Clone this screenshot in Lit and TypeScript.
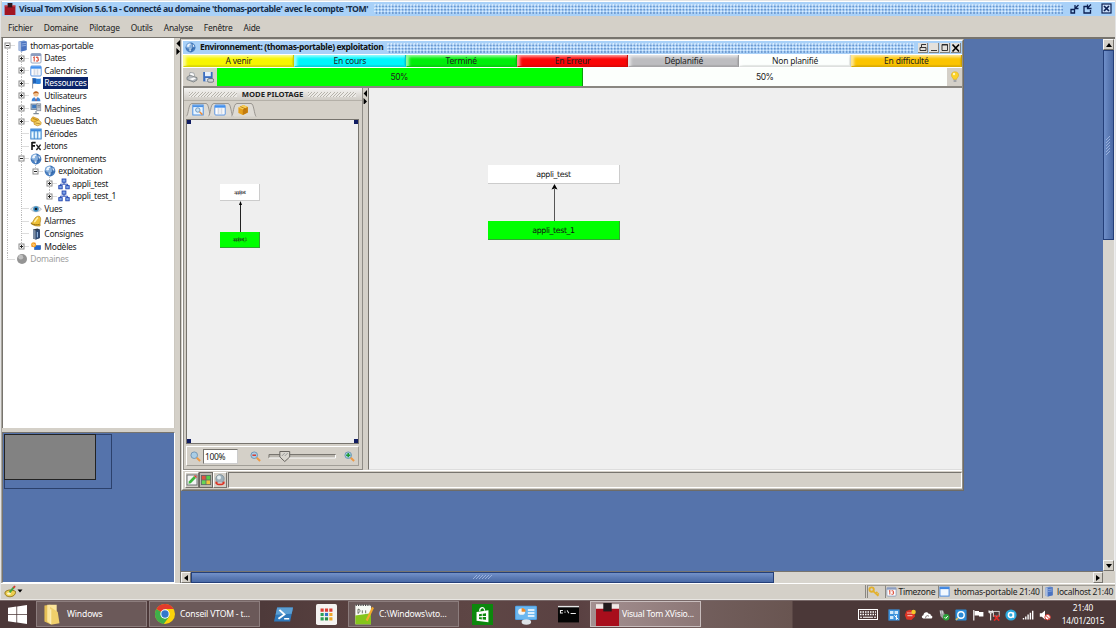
import { LitElement, html, svg, css, nothing, TemplateResult } from "lit";
import { customElement } from "lit/decorators.js";

type Glyph = TemplateResult;

const globe = svg`<circle cx="6" cy="6" r="5.4" fill="#4a80c2"/><circle cx="4.8" cy="4.6" r="3.6" fill="#86b0de"/><path d="M2 4.4 3.4 2.2 5.6 1.6 6.4 2.6 4.8 3.4 5 5 3 5.4zM8 2.4 9.6 3.4 10.2 5.4 8.6 5.2zM4.2 7 6.8 7.2 6.4 9.4 5.2 10.2z" fill="#f0f6fc"/><path d="M.9 6.6C4 8.4 8 8.4 11.1 6.6M7 .8C9 4 9 8 6.6 11.2" stroke="#2c5d9e" stroke-width=".6" fill="none"/>`;
const server = svg`<path d="M2.6 1.5 8 .6 10.6 1.4V10L5.2 11.4 2.6 10.6z" fill="#6f93cf"/><path d="M2.6 1.5 5.2 2.2V11.4L2.6 10.6z" fill="#a9bcdf"/><path d="M5.2 2.2 10.6 1.4V10L5.2 11.4z" fill="#4a72c0"/><path d="M5.6 4 10.2 3.3M5.6 6 10.2 5.3" stroke="#a9c2ea" stroke-width=".7"/>`;
const calDay = svg`<rect x="1" y="1.5" width="10" height="9.5" rx="1" fill="#fff" stroke="#7e92b5" stroke-width=".8"/><path d="M1 2h10v2H1z" fill="#8c9dc0"/><path d="M3.2 5.6 4.2 5V9.4M6 5.6C7 4.6 8.8 5.4 7.8 6.8 9.2 7.6 8 9.8 6 8.8" stroke="#d94a36" fill="none" stroke-width="1.1"/>`;
const calendar = svg`<rect x=".8" y="1" width="10.4" height="10" rx="1" fill="#fff" stroke="#4b8be0" stroke-width=".9"/><path d="M1 1.3h10v2.4H1z" fill="#4391ef"/><path d="M3 5h6.5M3 7h6.5M3 9h6.5M4.5 4.4v5.4M7.5 4.4v5.4" stroke="#c4cbd8" stroke-width=".6"/>`;
const columns = svg`<rect x=".8" y="1" width="10.4" height="10" fill="#bfe3fa" stroke="#377fca" stroke-width=".9"/><path d="M1 1.3h10v2H1z" fill="#3d89dd"/><path d="M4.3 3v8M7.7 3v8" stroke="#377fca" stroke-width=".8"/><path d="M2.4 4.5v5M6 4.5v5M9.4 4.5v5" stroke="#fff"/>`;
const flag = svg`<path d="M2.6 1v10.5" stroke="#8d99ab" stroke-width="1.1"/><path d="M3 1.4C5 .4 7 2.6 10.8 1.4V6.6C7 8 5 5.8 3 6.8z" fill="#2f84de"/><path d="M3 1.4C4 .9 5 1.3 6 1.7V6.6C5 6.2 4 6.3 3 6.8z" fill="#1e60b5"/>`;
const user = svg`<path d="M1.6 11.2C1.6 8.4 3.6 7 6 7s4.4 1.4 4.4 4.2z" fill="#3e85d8"/><path d="M4.4 7 6 9.6 7.6 7z" fill="#fff"/><path d="M6 7.6 5.4 10.8h1.3z" fill="#d8432c"/><circle cx="6" cy="4" r="2.6" fill="#f3c08b"/><path d="M3.2 4C3 .4 9 .4 8.8 4 7.8 2.6 5 2.6 3.2 4z" fill="#bc6422"/>`;
const machine = svg`<rect x="1" y="1" width="6.6" height="5.4" fill="#9cb3ce" stroke="#6d7c90" stroke-width=".8"/><rect x="2.2" y="2" width="4.2" height="3.2" fill="#3b78bf"/><rect x="6.8" y=".8" width="4" height="7" fill="#c1c7d0" stroke="#727d8b" stroke-width=".6"/><path d="M7.4 2.4h2.8M7.4 4h2.8" stroke="#5f6d7e" stroke-width=".7"/><path d="M6 8v2M3.4 10.6h5.4" stroke="#7e8b99" stroke-width="1.2"/>`;
const queue = svg`<path d="M1 4.2 2.8 1.8 8.6 4 8.8 6.6 6.2 8 1.2 6z" fill="#f2c03b" stroke="#b5790f" stroke-width=".6"/><path d="M4 7 8.6 5 11.2 7.4 10.8 9.6 7.4 10.8 4.2 9.4z" fill="#f7d568" stroke="#b5790f" stroke-width=".6"/><path d="M2.6 3.4 7.4 5M5.4 8 9.8 8.6" stroke="#8c5a10" stroke-width=".6"/>`;
const tokens = svg`<path d="M2 2v8M2 2.6h3.6M2 5.9h3" stroke="#111" stroke-width="1.6" fill="none"/><path d="M6.4 4.6 10.6 10M10.6 4.6 6.4 10" stroke="#222" stroke-width="1.4"/>`;
const network = svg`<path d="M6 4v2.2M2.4 8V6.2h7.2V8" stroke="#2a50b5" fill="none"/><rect x="4.1" y="1" width="3.8" height="3.2" fill="#7da4e6" stroke="#2144b0" stroke-width=".9"/><rect x=".8" y="7.6" width="3.4" height="3.2" fill="#7da4e6" stroke="#2144b0" stroke-width=".9"/><rect x="7.8" y="7.6" width="3.4" height="3.2" fill="#7da4e6" stroke="#2144b0" stroke-width=".9"/>`;
const eye = svg`<path d="M.6 6.2C3 2.4 9 2.4 11.4 6.2 9 9.6 3 9.6.6 6.2z" fill="#dfe4e8" stroke="#9aa5b0" stroke-width=".6"/><circle cx="6" cy="6" r="2.8" fill="#3c8fc4"/><circle cx="6" cy="6" r="1.3" fill="#111c28"/>`;
const bell = svg`<path d="M.8 8.2C3 7.6 3.4 5.2 5 3 6.4 1.2 8.8.8 9.8 1.6 11.2 3 10.6 5.4 10.2 7.4 9.8 8.8 10.6 10 10 11 6.6 11.4 3 10.6.8 8.2z" fill="#eebf35" stroke="#a87c14" stroke-width=".6"/><path d="M4.2 7C5.8 6.2 6.2 3.6 8 2.6" stroke="#fff0a8" stroke-width="1.6" fill="none"/><path d="M1.2 8.6C4 10 7 10 9.6 9.4" stroke="#8d6710" stroke-width=".9" fill="none"/>`;
const cabinet = svg`<path d="M3 1.6 7.4.6 9.8 1.6V10L5.8 11.4 3 10.4z" fill="#333b46"/><path d="M3 1.6 5.8 2.4V11.4L3 10.4z" fill="#7d8ea6"/><path d="M5.8 2.4 9.8 1.6V10L5.8 11.4z" fill="#2d4a75"/><path d="M7.4 4v5.4" stroke="#9fc0ea" stroke-width="1"/>`;
const model = svg`<rect x="4.6" y="4.6" width="6" height="4" fill="#2166cf" stroke="#164490" stroke-width=".5"/><circle cx="3.6" cy="3.8" r="2.5" fill="#f8a72a"/><circle cx="3.6" cy="3.8" r="1.1" fill="#fff2a0"/><path d="M1.6 6 5.2 1.8" stroke="#e4572e" stroke-width=".5"/>`;
const ball = svg`<circle cx="6" cy="6" r="5" fill="#949494"/><circle cx="4.8" cy="4.2" r="2.4" fill="#c0c0c0"/>`;
const printer = svg`<path d="M3.4 5 4 1.4 8 2.2 8.6 5" fill="#fff" stroke="#8c9298" stroke-width=".7"/><path d="M1 6.2 4 4.2 11 6.6V9L7.6 11 1 8.6z" fill="#b4b8bc" stroke="#6c7276" stroke-width=".7"/><path d="M3 8 6.4 9.2 10 7.4 8 6.6z" fill="#fafafa"/>`;
const save = svg`<path d="M1.2 1h9.4v9.4H1.2z" fill="#3b6ec0"/><path d="M3 1h5.8v4.2H3z" fill="#e8f0fb"/><path d="M3.4 7h4v3.4h-4z" fill="#dfe6ee"/><rect x="5.6" y="7.6" width="6" height="3.6" rx="1.4" fill="#d0d4d8" stroke="#505860" stroke-width=".7"/>`;
const magnify = svg`<circle cx="4.6" cy="4.6" r="3.6" fill="#a9cde6" stroke="#6f93b2"/><path d="M7.4 7.4 11 11" stroke="#ee9a45" stroke-width="2.2"/>`;
const magMinus = svg`${magnify}<path d="M2.6 4.6h4" stroke="#d8372c" stroke-width="1.6"/>`;
const magPlus = svg`${magnify}<path d="M2.3 4.6h4.6M4.6 2.3v4.6" stroke="#1c9a31" stroke-width="1.6"/>`;
const preview = svg`<rect x=".8" y="1" width="10.4" height="10" fill="#e9f5ff" stroke="#4b91e4"/><path d="M1 1.3h10v1.8H1z" fill="#4b91e4"/><circle cx="5.8" cy="6" r="2.2" fill="#cbe4f6" stroke="#5b88b4" stroke-width=".8"/><path d="M7.6 7.8 10.4 10.6" stroke="#e98b3b" stroke-width="1.5"/>`;
const box = svg`<path d="M1.4 3.6 6.4 1 10.8 3V8.4L5.8 11 1.4 9z" fill="#e5a01c"/><path d="M1.4 3.6 6.4 1 10.8 3 5.8 5.6z" fill="#f8cf58"/><path d="M5.8 5.6 10.8 3V8.4L5.8 11z" fill="#c47c0e"/><path d="M3.4 2.6 8 4.6V6" stroke="#a76708" fill="none" stroke-width=".7"/>`;
const bulb = svg`<path d="M6 .8C8.4.8 9.6 2.4 9.6 4.2 9.6 6 7.8 6.8 7.6 8.4H4.4C4.2 6.8 2.4 6 2.4 4.2 2.4 2.4 3.6.8 6 .8z" fill="#fcd22c" stroke="#d9a411" stroke-width=".5"/><circle cx="5" cy="3" r="1.2" fill="#fff7bd"/><path d="M4.6 8.8h2.8V11H4.6z" fill="#a2a5a8"/>`;
const pencil = svg`<rect x="1" y="1" width="10" height="10" fill="#f4f4f4" stroke="#6f7274"/><path d="M2.4 9.8 3 7.2 8 2 10 4 4.8 9.2z" fill="#3cb83f"/><path d="M8 2 9 1 11 3 10 4z" fill="#e13a2c"/>`;
const lights = svg`<rect x="1" y="1" width="10" height="10" fill="#60666a"/><path d="M1.8 1.8h3.8v3.8H1.8z" fill="#df5340"/><path d="M6.4 1.8h3.8v3.8H6.4z" fill="#53ce47"/><path d="M1.8 6.4h3.8v3.8H1.8z" fill="#66d654"/><path d="M6.4 6.4h3.8v3.8H6.4z" fill="#f1c53b"/>`;
const beacon = svg`<path d="M1.4 7.4h9.2v2C9 12 3 12 1.4 9.4z" fill="#dc3322"/><circle cx="6" cy="4.8" r="4.2" fill="#9fb0b9" stroke="#71828c" stroke-width=".6"/><circle cx="5" cy="3.6" r="2" fill="#e3edf1"/><path d="M3.6 9h4.8" stroke="#fff" stroke-width=".9"/>`;
const keyGlyph = svg`<circle cx="3.6" cy="3.6" r="2.2" fill="none" stroke="#e3b02a" stroke-width="1.9"/><path d="M5.2 5.2 10.4 10M7.6 7.6 9.4 5.8M9.2 9 10.8 7.4" stroke="#e3b02a" stroke-width="1.7"/>`;
const windowGlyph = svg`<rect x="1" y="1.2" width="10" height="9.8" fill="#f2f9ff" stroke="#3f86e2"/><path d="M1 1.2h10v2.2H1z" fill="#3f86e2"/>`;
const palette = svg`<path d="M1 6.6C3 4 8 4.2 10.6 6 11 9 8 11 5 10.8 2.4 10.6.4 9 1 6.6z" fill="#edcf51" stroke="#8e7016" stroke-width=".9"/><ellipse cx="4.6" cy="8" rx="1.8" ry="1" fill="#fff8ce"/><path d="M5.2 6.8 9 2.2" stroke="#41a83e" stroke-width="1.8"/><path d="M8.6 2.6 10.2 1" stroke="#d5392a" stroke-width="1.8"/>`;
const tom = svg`<path d="M0 1.4h12v10.6H0z" fill="#a80e1c"/><path d="M0 .6h12v2.4H0z" fill="#f0e9e7"/><path d="M3.8 0h4.4v4.4H3.8z" fill="#231b1d"/>`;
const titleTom = svg`<path d="M.6 2.6h10.8V12H.6z" fill="#a21522"/><path d="M3.6 0h4.8v4.4H3.6z" fill="#2c161d"/><path d="M.6 2.2h3v1.2h-3zM8.4 2.2h3v1.2h-3z" fill="#d04c50"/>`;

const start = svg`<path d="M0 1.8 5.3 1V5.7H0zM5.8.9 12 0V5.7H5.8zM0 6.2H5.3V11L0 10.2zM5.8 6.2H12V12L5.8 11.1z" fill="#fff"/>`;
const folder = svg`<path d="M1.4 .8 4.8.4V11.6L1.4 10z" fill="#e5bf55"/><path d="M3 .4H8.4V9L5 11.6 3 10z" fill="#fbe59c"/><path d="M4.6 1.6 9 4.6 10 11 5 11.8z" fill="#f0cf6b"/><path d="M5 3V11.4" stroke="#fff6cf" stroke-width=".5"/>`;
const chrome = svg`<circle cx="6" cy="6" r="6" fill="#fbd20a"/><path d="M6 6 .8 3A6 6 0 0 0 5.2 11.95L8.6 7.5z" fill="#3fae49"/><path d="M6 6 .8 3A6 6 0 0 1 11.2 3H6z" fill="#e23a2c"/><circle cx="6" cy="6" r="2.8" fill="#fff"/><circle cx="6" cy="6" r="2.2" fill="#3478cb"/>`;
const shell = svg`<path d="M2 1h10L10.2 11H0z" fill="#2e79bb"/><path d="M2 1h10L11.2 5.5 1 6.2z" fill="#5b9fd4"/><path d="M3.4 2.8 6.6 6 2.8 9M6.4 9h3.2" stroke="#fff" stroke-width="1.2" fill="none"/>`;
const apps = svg`<rect width="12" height="12" rx="1" fill="#f5f3f1"/><path d="M2.6 2.6h1.8v1.8H2.6zM5.1 2.6h1.8v1.8H5.1zM7.6 2.6h1.8v1.8H7.6z" fill="#dc3d33"/><path d="M2.6 5.1h1.8v1.8H2.6zM2.6 7.6h1.8v1.8H2.6z" fill="#2c9f56"/><path d="M5.1 5.1h1.8v1.8H5.1z" fill="#3771c8"/><path d="M7.6 5.1h1.8v1.8H7.6zM7.6 7.6h1.8v1.8H7.6z" fill="#f0a728"/><path d="M5.1 7.6h1.8v1.8H5.1z" fill="#268b45"/>`;
const notepad = svg`<path d="M.8 1h9.4v10.6H.8z" fill="#f8faf4"/><path d="M.8 6.8 10.2 5.6V11.6H.8z" fill="#85c51c"/><path d="M1 1.2h9" stroke="#454545" stroke-dasharray=".7 .7"/><path d="M2.4 3.4v2.4M2.4 3.4C4 3.2 4 5 2.4 5.6M5 4v1.6M7 4v1.6" stroke="#5c6156" stroke-width=".5" fill="none"/><path d="M7.6 9.6 11.4 2.4" stroke="#f0a92e" stroke-width="1.3"/>`;
const store = svg`<rect width="12" height="12" fill="#0c880d"/><path d="M2.6 4.6 9.4 3.6V10.4L2.6 9.6z" fill="#fff"/><path d="M4.4 4.2C4.4 1.6 7 1.2 7.2 3.8" stroke="#fff" stroke-width=".7" fill="none"/><path d="M4 5.8 5.6 5.6V6.9L4 7zM6.1 5.5 8 5.3V6.8L6.1 6.9zM4 7.5H5.6V8.8L4 8.6zM6.1 7.4H8V9L6.1 8.8z" fill="#0c880d"/>`;
const panel = svg`<rect x="0" y=".4" width="12" height="8.6" rx=".8" fill="#4f9fe2"/><rect x=".6" y="1" width="10.8" height="7.4" fill="#6cb7ef"/><circle cx="3.6" cy="4" r="1.9" fill="#f2f5f6"/><path d="M3.6 4V1.8A2.2 2.2 0 0 1 5.8 4z" fill="#f08a24"/><path d="M7 3h3.6M7 4.8h3.6M7 6.6h3.6" stroke="#fff" stroke-width=".9"/><ellipse cx="6.2" cy="10.2" rx="2.6" ry="1.6" fill="#dde2e6"/>`;
const terminal = svg`<rect width="12" height="10.4" y=".6" fill="#050505"/><path d="M0 1h12" stroke="#e6e6e6" stroke-width=".9"/><path d="M2.8 3.5H1.4V5h1.4M4 3.6v.5M4 4.6v.5M5.2 3.4 6.2 5.2M7.2 5.4h3" stroke="#eee" stroke-width=".6" fill="none"/>`;
const keyboard = svg`<rect x=".5" y=".5" width="19" height="10" fill="none" stroke="#fff"/><path d="M2 3h16M2 5.5h16" stroke="#fff" stroke-width="1.3" stroke-dasharray="1.5 1"/><path d="M5 8.3h10M2 8.3h2M16 8.3h2" stroke="#fff" stroke-width="1.1"/>`;
const trayBlue = svg`<rect x=".4" y=".4" width="11.2" height="11.2" fill="#3a91dc"/><path d="M2 2h3.4v3H2zM6.6 2H10v3H6.6zM2 7h3.4v3H2z" fill="#cfe8fb"/><path d="M6.4 6.4 10.4 10.4M8.4 6v4.8" stroke="#fff"/>`;
const trayRed = svg`<path d="M6 .8 10.4 2.6 11 7.4 7.4 11 2.6 10.4.8 6 2.4 2z" fill="#dc3325"/><path d="M3 4h5M3.4 6.6h5" stroke="#f6b3a5" stroke-width="1.1"/><circle cx="9.6" cy="3" r="2.2" fill="#f4c92a"/>`;
const cloud = svg`<path d="M3.2 9.6C.2 9.4.2 6.6 2.4 6.2 2.6 3.4 6 2.2 7.6 4.8 9.6 4.4 10 6 9.8 6.6 12 6.8 11.8 9.6 10 9.6z" fill="#fff"/><path d="M4.6 9.2C4.6 6.6 6.6 6 8 7.4" stroke="#4b3a3a" stroke-width=".7" fill="none"/>`;
const usb = svg`<path d="M1.6 1.2H5L7.4 7 4.6 9.4 2.4 7z" fill="#9c9fa0"/><path d="M2.6 2v2.6M4.4 2v2.6" stroke="#e4e4e4" stroke-width=".7"/><circle cx="8.2" cy="8.2" r="3.2" fill="#2ba33a"/><path d="M6.6 8.2 7.8 9.4 9.8 7" stroke="#fff" fill="none"/>`;
const sync = svg`<rect x=".4" y=".4" width="11.2" height="11.2" rx="1" fill="#2b8bd6"/><circle cx="6" cy="6" r="3.2" fill="none" stroke="#fff" stroke-width="1.4"/><path d="M1 10.8 3 9" stroke="#e6c35a" stroke-width="1.6"/>`;
const trayFlag = svg`<path d="M1.8 1v10.6" stroke="#fff" stroke-width="1.1"/><path d="M2.6 2H7v1h4.4v4.4H7v-1H2.6z" fill="#fff"/>`;
const noNet = svg`<path d="M1 1.4v2.4h3.4V1.4M2.7 4v7.4M1 2.4h3.4" stroke="#fff" fill="none"/><rect x="5.4" y="2.4" width="5.8" height="4.8" fill="none" stroke="#ddd" stroke-width=".9"/><path d="M6 6.4 11.2 11.6M11.2 6.4 6 11.6" stroke="#e12a26" stroke-width="1.6"/>`;
const avast = svg`<circle cx="6" cy="6" r="5.6" fill="#2aa8de"/><circle cx="5.8" cy="6" r="2.4" fill="none" stroke="#fff" stroke-width="1.5"/><path d="M8.6 3.4V8.8" stroke="#fff" stroke-width="1.3"/>`;
const signal = svg`<path d="M1.5 9v1.6M3.8 7.4v3.2M6.1 5.6v5M8.4 3.8v6.8M10.7 1.8v8.8" stroke="#fff" stroke-width="1.4"/>`;
const mute = svg`<path d="M.8 4.2h2L6 1.4v9.2L2.8 7.8h-2z" fill="#fff"/><circle cx="8.6" cy="8.2" r="2.7" fill="#fff" stroke="#d8352c"/><path d="M6.8 6.4 10.4 10" stroke="#d8352c"/>`;

const base = css`
  * { box-sizing: border-box; }
  .ico { display: block; flex: none; }
`;

const icon = (g: Glyph, w = 12, h = w, box = "0 0 12 12") =>
  html`<svg class="ico" width=${w} height=${h} viewBox=${box} preserveAspectRatio="none">${g}</svg>`;

interface Row { label: string; depth: number; glyph: Glyph; sign?: string; state?: string; last?: boolean; rails: number[]; }

const rows: Row[] = [
  { label: "thomas-portable", depth: 0, glyph: server, sign: "-", rails: [] },
  { label: "Dates", depth: 1, glyph: calDay, sign: "+", rails: [0] },
  { label: "Calendriers", depth: 1, glyph: calendar, sign: "+", rails: [0] },
  { label: "Ressources", depth: 1, glyph: flag, sign: "+", state: "selected", rails: [0] },
  { label: "Utilisateurs", depth: 1, glyph: user, sign: "+", rails: [0] },
  { label: "Machines", depth: 1, glyph: machine, sign: "+", rails: [0] },
  { label: "Queues Batch", depth: 1, glyph: queue, sign: "+", rails: [0] },
  { label: "Périodes", depth: 1, glyph: columns, rails: [0] },
  { label: "Jetons", depth: 1, glyph: tokens, rails: [0] },
  { label: "Environnements", depth: 1, glyph: globe, sign: "-", rails: [0] },
  { label: "exploitation", depth: 2, glyph: globe, sign: "-", last: true, rails: [0, 1] },
  { label: "appli_test", depth: 3, glyph: network, sign: "+", rails: [0, 1] },
  { label: "appli_test_1", depth: 3, glyph: network, sign: "+", last: true, rails: [0, 1] },
  { label: "Vues", depth: 1, glyph: eye, rails: [0] },
  { label: "Alarmes", depth: 1, glyph: bell, rails: [0] },
  { label: "Consignes", depth: 1, glyph: cabinet, rails: [0] },
  { label: "Modèles", depth: 1, glyph: model, sign: "+", last: true, rails: [0] },
  { label: "Domaines", depth: 0, glyph: ball, state: "disabled", last: true, rails: [] },
];

@customElement("resource-tree")
export class ResourceTree extends LitElement {
  static styles = [base, css`
    :host { display: block; background: #fff; padding-top: 1.5px; }
    .row { height: 12.56px; display: flex; align-items: center; font-size: 8.5px; letter-spacing: -.26px; color: #222; white-space: pre; }
    .row svg { display: block; flex: none; }
    .label { margin-left: 1.3px; padding: 0 1px; line-height: 11px; height: 12px; }
    .selected .label { background: #0a246a; color: #fff; }
    .disabled .label { color: #a0a0a0; }
  `];

  private branch(r: Row) {
    const x = 4.5 + r.depth * 14;
    const start = r === rows[0];
    return svg`
      ${r.rails.map(d => svg`<path d="M${4.5 + d * 14} 0V13" stroke="#bbb" stroke-dasharray="1 1"/>`)}
      <path d="M${x} ${start ? 6 : 0}V${r.last ? 6.5 : 13}M${x} 6.5h8" stroke="#bbb" stroke-dasharray="1 1" fill="none"/>
      ${r.sign ? svg`<rect x=${x - 2.5} y="4" width="5" height="5" fill="#fff" stroke="#8a8a8a"/><path d="M${x - 1.5} 6.5h3" stroke="#222"/>${r.sign === "+" ? svg`<path d="M${x} 5v3" stroke="#222"/>` : nothing}` : nothing}`;
  }

  render() {
    return rows.map(r => {
      const w = 13 + r.depth * 14;
      return html`<div class="row ${r.state ?? ""}"><svg width=${w} height="13" viewBox="0 0 ${w} 13">${this.branch(r)}</svg>${icon(r.glyph)}<span class="label">${r.label}</span></div>`;
    });
  }
}

@customElement("environment-window")
export class EnvironmentWindow extends LitElement {
  static styles = [base, css`
    :host { display: flex; flex-direction: column; background: #d4d0c8; border: 1px solid #d4d0c8; border-right-color: #6f6c66; border-bottom-color: #6f6c66; font-size: 8.5px; letter-spacing: -.2px; color: #222; }
    .inner { flex: 1; min-height: 0; display: flex; flex-direction: column; border: 1px solid #fff; border-right-color: #928f88; border-bottom-color: #928f88; }
    .title { height: 13px; display: flex; align-items: center; gap: 2px; background: #a9d1f8; padding: 0 1px 0 2px; font: bold 8.5px/12px "Noto Sans", sans-serif; letter-spacing: -.38px; white-space: nowrap; color: #111; }
    .title span { height: 13px; padding-left: 2px; }
    .stipple { flex: 1; height: 10px; margin: 0 2px; background: radial-gradient(circle at 30% 30%, #e2effd 0 .65px, transparent .9px), radial-gradient(circle at 75% 75%, #6b96cd 0 .75px, transparent 1px); background-size: 3.27px 3.27px; }
    .legend { height: 13px; display: flex; border-top: 1px solid #fff; }
    .legend span { flex: 1; display: grid; place-items: center; line-height: 12px; border-left: 1px solid rgba(255,255,255,.55); border-right: 1px solid rgba(0,0,0,.18); border-bottom: 1px solid rgba(0,0,0,.12); box-shadow: inset 2px 2px 3px rgba(255,255,255,.6), inset -1px -1px 1px rgba(0,0,0,.1); }
    .progress { height: 21px; display: flex; align-items: center; border-top: 1px solid #fff; border-bottom: 2px solid #8a8781; background: #d4d0c8; }
    .tools { width: 34px; display: flex; gap: 4px; padding-left: 3px; }
    .bar { flex: 1; height: 18px; display: grid; place-items: center; font: 8.5px Inter, sans-serif; letter-spacing: -.5px; }
    .green { background: #0f0; border-right: 1px solid #0a9d0a; }
    .white { background: #fcfffc; }
    .bulb { width: 15px; display: grid; place-items: center; }
    .split { flex: 1; min-height: 0; display: flex; }
    .left { width: 180px; display: flex; flex-direction: column; border: 1px solid #8f8c86; border-top: 0; padding: 0 3px 1px 2px; }
    .mode { height: 13px; margin: 0 -3px 0 -2px; padding: 0 6px 0 5px; display: flex; align-items: center; gap: 5px; background: linear-gradient(#f5f4f2, #cfcbc5); border-bottom: 1px solid #b4b0a8; font: bold 7.7px "Noto Sans", sans-serif; letter-spacing: -.05px; white-space: nowrap; }
    .hatch { flex: 1; height: 5px; background: repeating-linear-gradient(135deg, #b5b2ab 0 .8px, #eceae6 .8px 2.3px); }
    .tabs { height: 18px; display: flex; align-items: flex-end; padding-bottom: 2px; }
    .tab { display: block; position: relative; width: 22.4px; height: 15px; }
    .tab .ico { position: absolute; left: 6px; top: 2px; }
    .view { height: 325px; position: relative; background: #efefef; border: 1px solid #77746e; }
    .handle { position: absolute; width: 4px; height: 4px; background: #101c62; }
    .h1 { left: 0; top: 0; } .h2 { right: 0; top: 0; } .h3 { left: 0; bottom: 0; } .h4 { right: 0; bottom: 0; }
    .zoom { height: 20px; margin-top: 2px; display: flex; align-items: center; padding: 0 3px; border: 1px solid #fff; border-right-color: #a19e97; border-bottom-color: #a19e97; }
    .field { width: 35px; height: 15px; margin: 0 12px 0 2px; background: #fff; border: 1px solid #77746e; border-right-color: #ccc; border-bottom-color: #ccc; padding-left: 1px; line-height: 14px; letter-spacing: -.35px; }
    .slider { flex: 1; margin: 0 7px; }
    .sash { width: 5px; background: #d4d0c8; }
    .canvas { flex: 1; position: relative; background: #efefef; border-left: 1px solid #77746e; border-bottom: 1px solid #ddd; }
    .node { position: absolute; width: 132px; height: 19px; display: grid; place-items: center; font: 7.9px "DejaVu Sans", sans-serif; letter-spacing: -.4px; color: #111; border-right: 1px solid #ccc; border-bottom: 1px solid #ccc; }
    .n1, .m1 { background: #fff; }
    .n2, .m2 { background: #0f0; border-color: #31a331; }
    .n1 { left: 119px; top: 77px; } .n2 { left: 119px; top: 133px; }
    .edge { position: absolute; }
    .e1 { left: 181px; top: 96px; }
    .e2 { left: 50px; top: 81px; }
    .mini { position: absolute; left: 33px; width: 40px; display: grid; place-items: center; font: 4.6px "DejaVu Sans", sans-serif; letter-spacing: -1.15px; border-right: 1px solid #ccc; border-bottom: 1px solid #ccc; }
    .m1 { top: 64px; height: 17px; } .m2 { top: 112px; height: 16px; border-color: #31a331; }
    .foot { height: 19px; display: flex; border-top: 1px solid #fff; padding: 1px 0 1px 2px; }
    .btn { width: 14px; height: 16px; display: grid; place-items: center; border: 1px solid #fff; border-right-color: #77746e; border-bottom-color: #77746e; }
    .on { background: #bcb8b0; border-color: #6b6863; }
    .msg { flex: 1; margin-left: 1px; border: 1px solid #77746e; border-right-color: #fff; border-bottom-color: #fff; }
  `];

  render() {
    const legend = [["A venir", "#f7f500"], ["En cours", "#00f5fb"], ["Terminé", "#00ee0a"], ["En Erreur", "#fa0505"], ["Déplanifié", "#bdbdc0"], ["Non planifié", "#fcfffd"], ["En difficulté", "#fbc400"]];
    return html`<div class="inner">
      <div class="title">${icon(globe, 11)}<span>Environnement: (thomas-portable) exploitation</span><i class="stipple"></i>
        <svg class="ico" width="43" height="10" viewBox="0 0 43 10"><path d="M0 0h10v10H0zM11 0h10v10H11zM22 0h10v10H22zM33 0h10v10H33z" fill="#e4e1dc"/><path d="M0 9.5h10M11 9.5h10M22 9.5h10M33 9.5h10M9.5 0v10M20.5 0v10M31.5 0v10M42.5 0v10" stroke="#85837e"/><path d="M2 4.5h6v3H2zM3.5 4V1.5h4.5M13 7.5h6M24 1.5h5.5v6H24zM24 2h6" stroke="#222" stroke-width=".9" fill="none"/><path d="M34.5 1.5 41 8.5M41 1.5 34.5 8.5" stroke="#000" stroke-width="1.7"/></svg>
      </div>
      <div class="legend">${legend.map(([t, c]) => html`<span style="background:${c}">${t}</span>`)}</div>
      <div class="progress"><div class="tools">${icon(printer)}${icon(save)}</div><div class="bar green">50%</div><div class="bar white">50%</div><div class="bulb">${icon(bulb)}</div></div>
      <div class="split">
        <div class="left">
          <div class="mode"><i class="hatch"></i><span>MODE PILOTAGE</span><i class="hatch"></i></div>
          <div class="tabs">${[preview, calendar, box].map(g => html`<span class="tab"><svg class="edge" width="26" height="15" viewBox="0 0 26 15"><path d="M0 14.5C3 13 2 1.5 6 1.5H20C23 1.5 23 12 25 14.5" fill="#dedbd5" stroke="#8a8781" stroke-width=".8"/></svg>${icon(g, 12)}</span>`)}</div>
          <div class="view"><i class="handle h1"></i><i class="handle h2"></i><i class="handle h3"></i><i class="handle h4"></i>
            <div class="mini m1">appli_test</div><svg class="edge e2" width="7" height="31" viewBox="0 0 7 31"><path d="M3.5 2V31" stroke="#222"/><path d="M3.5 0 5 4H2z" fill="#000"/></svg><div class="mini m2">appli_test_1</div></div>
          <div class="zoom">${icon(magnify, 11)}<div class="field">100%</div>${icon(magMinus, 11)}
            <svg class="slider" height="14" width="70" viewBox="0 0 70 14" preserveAspectRatio="none"><path d="M1 9V5.5h67.5V9z" fill="#bab6ae"/><path d="M1 9V5.5h67.5" stroke="#77746e" fill="none"/><path d="M1 9h67.5V6" stroke="#fff" fill="none"/><path d="M12 2.5h10V8l-5 4.5L12 8z" fill="#d8d5ce" stroke="#66635e"/><path d="M14 7 17 4M17 7 20 4" stroke="#999"/></svg>
            ${icon(magPlus, 11)}</div>
        </div>
        <div class="sash"><svg class="ico" width="5" height="16" viewBox="0 0 5 16"><path d="M4 2V9L.6 5.5zM.6 10v7L4 13.5z" fill="#000"/></svg></div>
        <div class="canvas"><div class="node n1">appli_test</div><svg class="edge e1" width="9" height="38" viewBox="0 0 9 38"><path d="M4.5 5V38" stroke="#555"/><path d="M4.5 0 7.5 5.5 4.5 4.5 1.5 5.5z" fill="#000"/></svg><div class="node n2">appli_test_1</div></div>
      </div>
      <div class="foot"><span class="btn">${icon(pencil)}</span><span class="btn on">${icon(lights)}</span><span class="btn">${icon(beacon)}</span><span class="msg"></span></div>
    </div>`;
  }
}

@customElement("task-bar")
export class TaskBar extends LitElement {
  static styles = [base, css`
    :host { display: flex; align-items: stretch; height: 28px; background: linear-gradient(90deg, #4c3839 0 36px, #4e3a3a 262px, #58403f 348px, #5e4645 480px, #5a4142 580px, #725e5c 702px, #695551 792px, #4b3838 793px); color: #fff; font-size: 8.6px; letter-spacing: -.17px; border-top: 1px solid #776767; }
    .task { width: 111px; margin: 0 2px 1px 0; display: flex; align-items: center; background: #6b5959; border: 1px solid #8c7d7d; padding-left: 5px; white-space: pre; }
    .active { background: linear-gradient(90deg, #a38f90, #8c7776); border-color: #c8bdbd; letter-spacing: -.24px; }
    .task span { margin-left: 5px; }
    .task .wide { margin-left: 4px; }
    .active span { margin-left: 3px; }
    .pin { display: grid; place-items: center; width: 43px; }
    .pin.start { width: 36px; padding-right: 1px; }
    .tray { margin-left: auto; display: flex; align-items: center; gap: 4.8px; }
    .keys { margin-right: 5px; }
    .clock { width: 48px; margin: 0 9px 0 3.4px; text-align: center; line-height: 12.5px; font-size: 8.3px; }
    .pins { width: 86px; display: flex; justify-content: space-between; }
  `];

  render() {
    return html`<div class="pin start">${icon(start, 19)}</div>
      <div class="task">${icon(folder, 21)}<span class="wide">Windows</span></div>
      <div class="task">${icon(chrome, 20)}<span>Conseil VTOM - t...</span></div>
      <div class="pins"><div class="pin">${icon(shell, 19, 17)}</div><div class="pin">${icon(apps, 21)}</div></div>
      <div class="task">${icon(notepad, 20, 22)}<span>C:\\Windows\\vto...</span></div>
      <div class="pin">${icon(store, 21)}</div><div class="pin">${icon(panel, 22, 20)}</div><div class="pin">${icon(terminal, 21, 19)}</div>
      <div class="task active">${icon(tom, 23)}<span>Visual Tom XVisio...</span></div>
      <div class="tray"><span class="keys">${icon(keyboard, 20, 11, "0 0 20 11")}</span>
        ${[trayBlue, trayRed, cloud, usb, sync, trayFlag, noNet, avast, signal, mute].map(g => icon(g))}
        <div class="clock">21:40<br>14/01/2015</div></div>`;
  }
}

@customElement("app-root")
export class AppRoot extends LitElement {
  static styles = [base, css`
    :host { display: flex; flex-direction: column; width: 1116px; height: 628px; overflow: hidden; background: #d4d0c8; font-family: "Noto Sans", sans-serif; color: #222; }
    .frame { height: 600px; display: flex; flex-direction: column; border: solid #e4e4e4; border-width: 1px 1px 0; }
    .title { height: 16px; display: flex; align-items: center; padding: 0 3px 0 2px; background: #a9d1f8; border: solid #d4d0c8; border-width: 0 0 1px 1px; box-shadow: inset 0 1px #fff; font: bold 8.7px "Noto Sans", sans-serif; letter-spacing: -.4px; color: #162e4a; white-space: nowrap; }
    .title span { margin-left: 3px; }
    .stipple { flex: 1; height: 10px; margin: 0 5px 0 6px; background: radial-gradient(circle at 30% 30%, #e2effd 0 .65px, transparent .9px), radial-gradient(circle at 75% 75%, #6b96cd 0 .75px, transparent 1px); background-size: 3.27px 3.27px; }
    .menu { height: 20px; display: flex; align-items: center; gap: 11px; padding-left: 7px; font-size: 8.4px; letter-spacing: -.2px; }
    .menu span { padding-right: .1px; }
    .body { flex: 1; min-height: 0; display: flex; }
    .side { width: 174px; display: flex; flex-direction: column; border-left: 1px solid #aaa7a0; border-top: 1px solid #77746e; }
    .tree { height: 390px; border-left: 1px solid #77746e; border-right: 1px solid #ccc8c0; }
    .overview { flex: 1; margin-top: 4px; background: #5573ab; position: relative; border: 1px solid #77746e; border-color: #77746e #fff #fff #77746e; }
    .extent { position: absolute; left: 1px; top: 1px; width: 108px; height: 55px; border: 1px solid #2c416c; }
    .visible { position: absolute; left: 1px; top: 1px; width: 92px; height: 46px; border: 1px solid #222; background: #828282; }
    .sash { width: 5px; border-top: 1px solid #77746e; }
    .desk { flex: 1; min-width: 0; display: grid; grid-template-columns: 1fr 12px; grid-template-rows: 1fr 12px; border-top: 2px solid #77746e; }
    .area { position: relative; background: #5573ab; border-left: 1px solid #77746e; }
    environment-window { position: absolute; left: 0; top: 0; width: 783px; height: 452px; }
    .vbar { display: flex; flex-direction: column; border-right: 1px solid #eee; }
    .hbar { display: flex; border-top: 1px solid #77746e; border-left: 1px solid #77746e; }
    .btn { width: 11px; height: 11px; display: grid; place-items: center; background: #d4d0c8; border: 1px solid #f5f5f5; border-right-color: #77746e; border-bottom-color: #77746e; }
    .hbar .btn { width: 10px; }
    .thumb { display: grid; place-items: center; border: 1px solid #243f79; }
    .vt { height: 190px; width: 11px; background: linear-gradient(90deg, #6f8fc9, #5c7bb5 50%, #4a6aa6); }
    .ht { width: 583px; height: 11px; background: linear-gradient(#7392c9, #5c7bb5 50%, #4a6aa6); }
    .trough { flex: 1; background: #d8d5ce; }
    .status { height: 17px; display: flex; align-items: center; justify-content: flex-end; border-top: 1px solid #fff; border-bottom: 1px solid #e8e6e2; font-size: 8.5px; letter-spacing: -.25px; padding: 0 0 1px 3px; white-space: nowrap; }
    .status .pal { margin-right: auto; display: flex; align-items: center; }
    .cell { height: 13px; display: flex; align-items: center; gap: 2px; padding: 0; border-left: 1px solid #8a8781; border-top: 1px solid #a19e97; }
    .c1 { width: 18px; } .c2 { width: 53.5px; } .c3 { width: 104px; gap: 4px; } .c4 { width: 73px; gap: 3px; }
    .sep { width: 2px; height: 13px; border-left: 1px solid #8a8781; }
  `];

  render() {
    return html`<div class="frame">
      <div class="title">${icon(titleTom)}<span>Visual Tom XVision 5.6.1a - Connecté au domaine 'thomas-portable' avec le compte 'TOM'</span><i class="stipple"></i>
        <svg class="ico" width="44" height="13" viewBox="0 0 44 13"><path d="M3 7.5h3.5v3.5H3zM7 6.5 10.5 3M7 3v3.5h3.5M19 4.5h-3v6.5h6.5V8M19.5 6 23 2.5M19.5 2.6v3.9h4" stroke="#0b1f52" fill="none" stroke-width="1.3"/><rect x="34" y="2" width="9" height="9" fill="#c8dcf8" stroke="#0b1f52" stroke-width="1.2"/><path d="M36 4 41 9M41 4 36 9" stroke="#0b1f52" stroke-width="1.7"/></svg>
      </div>
      <div class="menu">${["Fichier", "Domaine", "Pilotage", "Outils", "Analyse", "Fenêtre", "Aide"].map(m => html`<span>${m}</span>`)}</div>
      <div class="body">
        <div class="side"><resource-tree class="tree"></resource-tree><div class="overview"><i class="extent"></i><i class="visible"></i></div></div>
        <div class="sash"><svg class="ico" width="5" height="18" viewBox="0 0 5 18"><path d="M5 2V9L1.4 5.5zM1.4 10v7L5 13.5z" fill="#000"/></svg></div>
        <div class="desk">
          <div class="area"><environment-window></environment-window></div>
          <div class="vbar"><span class="btn"><svg class="ico" width="6" height="4"><path d="M0 4 3 0 6 4z"/></svg></span><span class="thumb vt"><svg class="ico" width="5" height="19" viewBox="0 0 5 19"><path d="M0 4 4 0M0 7 4 3M0 10 4 6M0 13 4 9M0 16 4 12M0 19 4 15" stroke="#9fb6df" stroke-width=".9"/></svg></span><span class="trough"></span><span class="btn"><svg class="ico" width="6" height="4"><path d="M0 0 3 4 6 0z"/></svg></span></div>
          <div class="hbar"><span class="btn"><svg class="ico" width="4" height="6"><path d="M4 0 0 3 4 6z"/></svg></span><span class="thumb ht"><svg class="ico" width="20" height="5"><path d="M0 4 4 0M3 4 7 0M6 4 10 0M9 4 13 0M12 4 16 0M15 4 19 0" stroke="#9fb6df" stroke-width=".9"/></svg></span><span class="trough"></span><span class="btn"><svg class="ico" width="4" height="6"><path d="M0 0 4 3 0 6z"/></svg></span></div>
          <span></span>
        </div>
      </div>
      <div class="status"><span class="pal">${icon(palette, 13)}<svg class="ico" width="6" height="4"><path d="M.5.5 3 3.5 5.5.5z"/></svg></span>
        <i class="sep"></i><span class="cell c1">${icon(keyGlyph)}</span><span class="cell c2">${icon(calDay, 11)}Timezone</span><span class="cell c3">${icon(windowGlyph, 11)}thomas-portable 21:40</span><span class="cell c4">${icon(server, 11)}localhost 21:40</span></div>
    </div>
    <task-bar></task-bar>`;
  }
}
